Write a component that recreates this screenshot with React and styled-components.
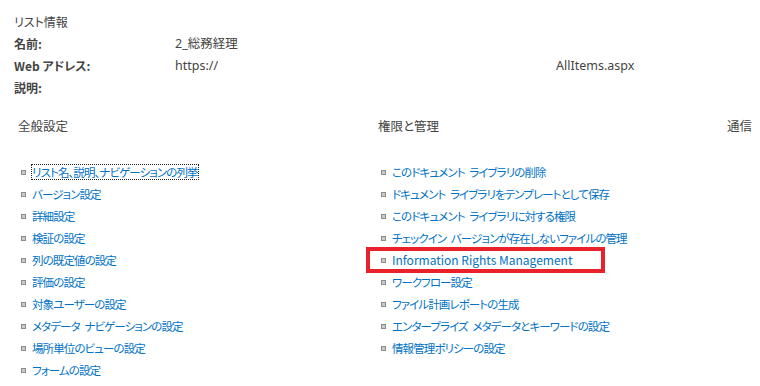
import React from 'react'
import styled, { createGlobalStyle } from 'styled-components'

const general = [
  'リスト名、説明、ナビゲーションの列挙',
  'バージョン設定',
  '詳細設定',
  '検証の設定',
  '列の既定値の設定',
  '評価の設定',
  '対象ユーザーの設定',
  'メタデータ ナビゲーションの設定',
  '場所単位のビューの設定',
  'フォームの設定',
];

const permissions = [
  'このドキュメント ライブラリの削除',
  'ドキュメント ライブラリをテンプレートとして保存',
  'このドキュメント ライブラリに対する権限',
  'チェックイン バージョンが存在しないファイルの管理',
  'Information Rights Management',
  'ワークフロー設定',
  'ファイル計画レポートの生成',
  'エンタープライズ メタデータとキーワードの設定',
  '情報管理ポリシーの設定',
];

const IRM = 'Information Rights Management';

const App = () => (
  <Page>
    <GlobalStyle />
    <Info>
      <InfoTitle>リスト情報</InfoTitle>
      <InfoRow>
        <Label>名前:</Label>
        <Value>2_総務経理</Value>
      </InfoRow>
      <InfoRow>
        <Label>Web アドレス:</Label>
        <Value>
          https://
          <Hidden />
          AllItems.aspx
        </Value>
      </InfoRow>
      <InfoRow $short>
        <Label>説明:</Label>
        <Value />
      </InfoRow>
    </Info>
    <Columns>
      <Column $pad={18}>
        <Heading>全般設定</Heading>
        <List>
          {general.map((t, i) => (
            <Item key={t}>
              <Bullet />
              <Link $focused={i === 0}>{t}</Link>
            </Item>
          ))}
        </List>
      </Column>
      <Column $pad={18}>
        <Heading>権限と管理</Heading>
        <List>
          {permissions.map((t) => (
            <Item key={t} $highlight={t === IRM}>
              <Bullet />
              <Link $latin={t === IRM}>{t}</Link>
            </Item>
          ))}
        </List>
      </Column>
      <Column $pad={18}>
        <Heading>通信</Heading>
      </Column>
    </Columns>
  </Page>
);

export default App;

//#region StyledComponents
const GlobalStyle = createGlobalStyle`
  body {
    margin: 0;
    background: #fff;
    font-family: "Noto Sans CJK JP", "Noto Sans", sans-serif;
    font-size: 12px;
    color: #444;
    font-feature-settings: "palt";
  }
`;

const Page = styled.div`
  width: 760px;
  height: 386px;
  overflow: hidden;
  padding: 11px 0 0 0;
  box-sizing: border-box;
`;

const Info = styled.div`
  padding-left: 14px;
`;

const InfoTitle = styled.div`
  height: 22px;
  line-height: 22px;
  font-size: 12px;
  color: #444;
`;

const InfoRow = styled.div`
  display: flex;
  height: ${p => (p.$short ? '19px' : '22px')};
  line-height: 22px;
`;

const Label = styled.div`
  width: 161px;
  font-weight: bold;
  font-size: 12px;
  color: #444;
`;

const Value = styled.div`
  display: flex;
  font-family: "Noto Sans", "Noto Sans CJK JP", sans-serif;
  font-size: 12.5px;
  color: #444;
`;

const Hidden = styled.span`
  width: 338px;
`;

const Columns = styled.div`
  display: grid;
  grid-template-columns: 360px 349px 1fr;
  margin-top: 20px;
`;

const Column = styled.div`
  padding-left: ${p => p.$pad}px;
`;

const Heading = styled.div`
  height: 20px;
  line-height: 20px;
  font-size: 12.5px;
  color: #444;
`;

const List = styled.ul`
  list-style: none;
  margin: 25px 0 0 0;
  padding: 0;
`;

const Item = styled.li`
  display: flex;
  align-items: center;
  height: 22px;
  padding-left: 3px;
  ${p => p.$highlight && `
    width: 235px;
    box-sizing: border-box;
    margin-left: -10px;
    padding-left: 13px;
    outline: 4px solid #e8212a;
    outline-offset: -2px;
  `}
`;

const Bullet = styled.span`
  width: 5px;
  height: 5px;
  box-sizing: border-box;
  border: 1px solid #8c8c8c;
  background: #c9c9c9;
  margin-right: 6px;
  flex-shrink: 0;
`;

const Link = styled.span`
  color: #0072c6;
  font-size: ${p => (p.$latin ? '12px' : '11.5px')};
  letter-spacing: ${p => (p.$latin ? '0' : '-0.9px')};
  word-spacing: ${p => (p.$latin ? '0' : '3px')};
  line-height: 14px;
  white-space: nowrap;
  ${p => p.$focused && `outline: 1px dotted #222; outline-offset: 0;`}
`;
//#endregion
